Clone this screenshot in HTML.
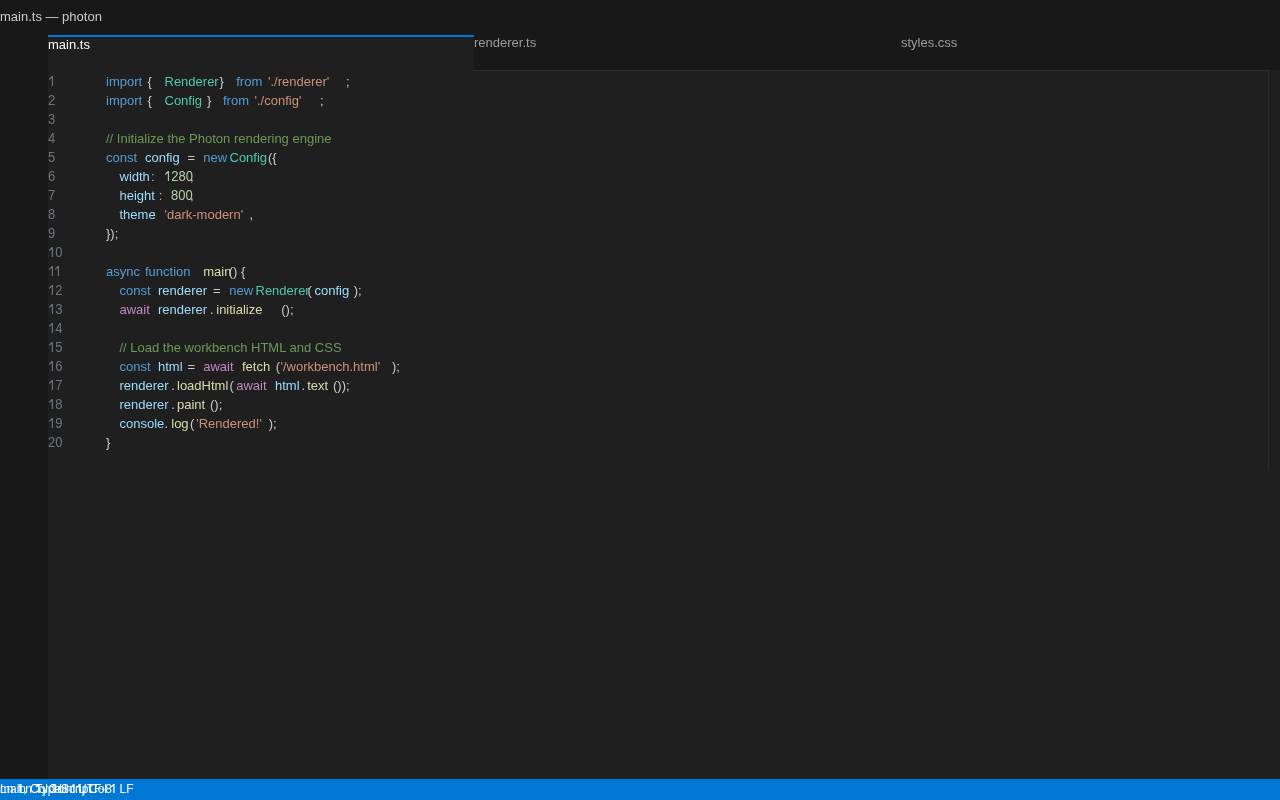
<!DOCTYPE html>
<html><head><meta charset="utf-8"><style>
html,body{margin:0;padding:0;width:1280px;height:800px;overflow:hidden;background:#181818;font-family:"Liberation Sans",sans-serif;}
#root{position:absolute;left:0;top:0;width:1280px;height:800px;will-change:transform}
.bg{position:absolute}
.tk{position:absolute;font-size:13px;line-height:19px;white-space:pre;transform:scaleY(1);transform-origin:0 14px}
.one{position:absolute;overflow:visible}
.dg{transform:scaleY(1.075);transform-origin:0 14px}
.t15{position:absolute;font-size:13px;line-height:15px;white-space:pre;transform:scaleY(1);transform-origin:0 12px}
.sb{position:absolute;top:782px;font-size:12px;line-height:14px;white-space:pre;color:#ffffff;transform:scaleY(1);transform-origin:0 11px}
</style></head><body>
<div id="root">
<div class="bg" style="left:48px;top:35px;width:426px;height:35px;background:#1f1f1f"></div>
<div class="bg" style="left:48px;top:35px;width:426px;height:2px;background:#0078d4"></div>
<div class="bg" style="left:48px;top:70px;width:1232px;height:709px;background:#1f1f1f"></div>
<div class="bg" style="left:474px;top:70px;width:794px;height:1px;background:#2b2b2b"></div>
<div class="bg" style="left:1268px;top:70px;width:1px;height:399px;background:#2b2b2b"></div>
<div class="bg" style="left:0;top:779px;width:1280px;height:21px;background:#0078d4"></div>
<span class="t15" style="left:0;top:9px;color:#cccccc">main.ts — photon</span>
<span class="t15" style="left:48px;top:36.5px;color:#ffffff">main.ts</span>
<span class="t15" style="left:474px;top:34.5px;color:#9d9d9d">renderer.ts</span>
<span class="t15" style="left:901px;top:34.5px;color:#9d9d9d">styles.css</span>
<svg class="one" style="left:48.0px;top:75px" width="7" height="12"><polygon points="3.85,1.00 4.95,1.00 4.95,11.00 3.85,11.00 3.85,3.10 1.10,4.90 1.10,3.80" fill="#6e7681"/></svg>
<span class="tk" style="left:106px;top:72px;color:#569cd6">import</span>
<span class="tk" style="left:147.5px;top:72px;color:#cccccc">{</span>
<span class="tk" style="left:164.5px;top:72px;color:#4ec9b0">Renderer</span>
<span class="tk" style="left:219.5px;top:72px;color:#cccccc">}</span>
<span class="tk" style="left:236.25px;top:72px;color:#569cd6">from</span>
<span class="tk" style="left:268px;top:72px;color:#ce9178">&#x27;./renderer&#x27;</span>
<span class="tk" style="left:346px;top:72px;color:#cccccc">;</span>
<span class="tk dg" style="left:48.0px;top:91px;color:#6e7681">2</span>
<span class="tk" style="left:106px;top:91px;color:#569cd6">import</span>
<span class="tk" style="left:147.5px;top:91px;color:#cccccc">{</span>
<span class="tk" style="left:164.5px;top:91px;color:#4ec9b0">Config</span>
<span class="tk" style="left:207px;top:91px;color:#cccccc">}</span>
<span class="tk" style="left:223px;top:91px;color:#569cd6">from</span>
<span class="tk" style="left:254.5px;top:91px;color:#ce9178">&#x27;./config&#x27;</span>
<span class="tk" style="left:320px;top:91px;color:#cccccc">;</span>
<span class="tk dg" style="left:48.0px;top:110px;color:#6e7681">3</span>
<span class="tk dg" style="left:48.0px;top:129px;color:#6e7681">4</span>
<span class="tk" style="left:106px;top:129px;color:#6a9955">// Initialize the Photon rendering engine</span>
<span class="tk dg" style="left:48.0px;top:148px;color:#6e7681">5</span>
<span class="tk" style="left:106px;top:148px;color:#569cd6">const</span>
<span class="tk" style="left:145px;top:148px;color:#9cdcfe">config</span>
<span class="tk" style="left:187.5px;top:148px;color:#cccccc">=</span>
<span class="tk" style="left:203.25px;top:148px;color:#569cd6">new</span>
<span class="tk" style="left:229.5px;top:148px;color:#4ec9b0">Config</span>
<span class="tk" style="left:268px;top:148px;color:#cccccc">({</span>
<span class="tk dg" style="left:48.0px;top:167px;color:#6e7681">6</span>
<span class="tk" style="left:119.5px;top:167px;color:#9cdcfe">width</span>
<span class="tk" style="left:151px;top:167px;color:#d7ba7d">:</span>
<svg class="one" style="left:164.0px;top:170px" width="7" height="12"><polygon points="3.85,1.00 4.95,1.00 4.95,11.00 3.85,11.00 3.85,3.10 1.10,4.90 1.10,3.80" fill="#b5cea8"/></svg><span class="tk dg" style="left:171.234375px;top:167px;color:#b5cea8">2</span><span class="tk dg" style="left:178.46875px;top:167px;color:#b5cea8">8</span><span class="tk dg" style="left:185.703125px;top:167px;color:#b5cea8">0</span>
<span class="tk" style="left:190px;top:167px;color:#cccccc">,</span>
<span class="tk dg" style="left:48.0px;top:186px;color:#6e7681">7</span>
<span class="tk" style="left:119.5px;top:186px;color:#9cdcfe">height</span>
<span class="tk" style="left:158.75px;top:186px;color:#d7ba7d">:</span>
<span class="tk dg" style="left:171.0px;top:186px;color:#b5cea8">8</span><span class="tk dg" style="left:178.234375px;top:186px;color:#b5cea8">0</span><span class="tk dg" style="left:185.46875px;top:186px;color:#b5cea8">0</span>
<span class="tk" style="left:190px;top:186px;color:#cccccc">,</span>
<span class="tk dg" style="left:48.0px;top:205px;color:#6e7681">8</span>
<span class="tk" style="left:119.5px;top:205px;color:#9cdcfe">theme</span>
<span class="tk" style="left:152px;top:205px;color:#d7ba7d">:</span>
<span class="tk" style="left:164.5px;top:205px;color:#ce9178">&#x27;dark-modern&#x27;</span>
<span class="tk" style="left:249.5px;top:205px;color:#cccccc">,</span>
<span class="tk dg" style="left:48.0px;top:224px;color:#6e7681">9</span>
<span class="tk" style="left:106px;top:224px;color:#cccccc">});</span>
<svg class="one" style="left:48.0px;top:246px" width="7" height="12"><polygon points="3.85,1.00 4.95,1.00 4.95,11.00 3.85,11.00 3.85,3.10 1.10,4.90 1.10,3.80" fill="#6e7681"/></svg><span class="tk dg" style="left:55.234375px;top:243px;color:#6e7681">0</span>
<svg class="one" style="left:48.0px;top:265px" width="7" height="12"><polygon points="3.85,1.00 4.95,1.00 4.95,11.00 3.85,11.00 3.85,3.10 1.10,4.90 1.10,3.80" fill="#6e7681"/></svg><svg class="one" style="left:54.234375px;top:265px" width="7" height="12"><polygon points="3.85,1.00 4.95,1.00 4.95,11.00 3.85,11.00 3.85,3.10 1.10,4.90 1.10,3.80" fill="#6e7681"/></svg>
<span class="tk" style="left:106px;top:262px;color:#569cd6">async</span>
<span class="tk" style="left:145px;top:262px;color:#569cd6">function</span>
<span class="tk" style="left:203.25px;top:262px;color:#dcdcaa">main</span>
<span class="tk" style="left:228.75px;top:262px;color:#cccccc">()</span>
<span class="tk" style="left:241px;top:262px;color:#cccccc">{</span>
<svg class="one" style="left:48.0px;top:284px" width="7" height="12"><polygon points="3.85,1.00 4.95,1.00 4.95,11.00 3.85,11.00 3.85,3.10 1.10,4.90 1.10,3.80" fill="#6e7681"/></svg><span class="tk dg" style="left:55.234375px;top:281px;color:#6e7681">2</span>
<span class="tk" style="left:119.5px;top:281px;color:#569cd6">const</span>
<span class="tk" style="left:158px;top:281px;color:#9cdcfe">renderer</span>
<span class="tk" style="left:213px;top:281px;color:#cccccc">=</span>
<span class="tk" style="left:229.25px;top:281px;color:#569cd6">new</span>
<span class="tk" style="left:255.5px;top:281px;color:#4ec9b0">Renderer</span>
<span class="tk" style="left:307.5px;top:281px;color:#cccccc">(</span>
<span class="tk" style="left:314.5px;top:281px;color:#9cdcfe">config</span>
<span class="tk" style="left:353.75px;top:281px;color:#cccccc">);</span>
<svg class="one" style="left:48.0px;top:303px" width="7" height="12"><polygon points="3.85,1.00 4.95,1.00 4.95,11.00 3.85,11.00 3.85,3.10 1.10,4.90 1.10,3.80" fill="#6e7681"/></svg><span class="tk dg" style="left:55.234375px;top:300px;color:#6e7681">3</span>
<span class="tk" style="left:119.5px;top:300px;color:#c586c0">await</span>
<span class="tk" style="left:158px;top:300px;color:#9cdcfe">renderer</span>
<span class="tk" style="left:210px;top:300px;color:#cccccc">.</span>
<span class="tk" style="left:216.25px;top:300px;color:#dcdcaa">initialize</span>
<span class="tk" style="left:281.25px;top:300px;color:#cccccc">();</span>
<svg class="one" style="left:48.0px;top:322px" width="7" height="12"><polygon points="3.85,1.00 4.95,1.00 4.95,11.00 3.85,11.00 3.85,3.10 1.10,4.90 1.10,3.80" fill="#6e7681"/></svg><span class="tk dg" style="left:55.234375px;top:319px;color:#6e7681">4</span>
<svg class="one" style="left:48.0px;top:341px" width="7" height="12"><polygon points="3.85,1.00 4.95,1.00 4.95,11.00 3.85,11.00 3.85,3.10 1.10,4.90 1.10,3.80" fill="#6e7681"/></svg><span class="tk dg" style="left:55.234375px;top:338px;color:#6e7681">5</span>
<span class="tk" style="left:119.5px;top:338px;color:#6a9955">// Load the workbench HTML and CSS</span>
<svg class="one" style="left:48.0px;top:360px" width="7" height="12"><polygon points="3.85,1.00 4.95,1.00 4.95,11.00 3.85,11.00 3.85,3.10 1.10,4.90 1.10,3.80" fill="#6e7681"/></svg><span class="tk dg" style="left:55.234375px;top:357px;color:#6e7681">6</span>
<span class="tk" style="left:119.5px;top:357px;color:#569cd6">const</span>
<span class="tk" style="left:158px;top:357px;color:#9cdcfe">html</span>
<span class="tk" style="left:187.5px;top:357px;color:#cccccc">=</span>
<span class="tk" style="left:203.25px;top:357px;color:#c586c0">await</span>
<span class="tk" style="left:242px;top:357px;color:#dcdcaa">fetch</span>
<span class="tk" style="left:275.75px;top:357px;color:#cccccc">(</span>
<span class="tk" style="left:280.5px;top:357px;color:#ce9178">&#x27;/workbench.html&#x27;</span>
<span class="tk" style="left:392px;top:357px;color:#cccccc">);</span>
<svg class="one" style="left:48.0px;top:379px" width="7" height="12"><polygon points="3.85,1.00 4.95,1.00 4.95,11.00 3.85,11.00 3.85,3.10 1.10,4.90 1.10,3.80" fill="#6e7681"/></svg><span class="tk dg" style="left:55.234375px;top:376px;color:#6e7681">7</span>
<span class="tk" style="left:119.5px;top:376px;color:#9cdcfe">renderer</span>
<span class="tk" style="left:171.25px;top:376px;color:#cccccc">.</span>
<span class="tk" style="left:177px;top:376px;color:#dcdcaa">loadHtml</span>
<span class="tk" style="left:229.5px;top:376px;color:#cccccc">(</span>
<span class="tk" style="left:236.25px;top:376px;color:#c586c0">await</span>
<span class="tk" style="left:275px;top:376px;color:#9cdcfe">html</span>
<span class="tk" style="left:301.5px;top:376px;color:#cccccc">.</span>
<span class="tk" style="left:307.25px;top:376px;color:#dcdcaa">text</span>
<span class="tk" style="left:333px;top:376px;color:#cccccc">());</span>
<svg class="one" style="left:48.0px;top:398px" width="7" height="12"><polygon points="3.85,1.00 4.95,1.00 4.95,11.00 3.85,11.00 3.85,3.10 1.10,4.90 1.10,3.80" fill="#6e7681"/></svg><span class="tk dg" style="left:55.234375px;top:395px;color:#6e7681">8</span>
<span class="tk" style="left:119.5px;top:395px;color:#9cdcfe">renderer</span>
<span class="tk" style="left:171.25px;top:395px;color:#cccccc">.</span>
<span class="tk" style="left:177px;top:395px;color:#dcdcaa">paint</span>
<span class="tk" style="left:210px;top:395px;color:#cccccc">();</span>
<svg class="one" style="left:48.0px;top:417px" width="7" height="12"><polygon points="3.85,1.00 4.95,1.00 4.95,11.00 3.85,11.00 3.85,3.10 1.10,4.90 1.10,3.80" fill="#6e7681"/></svg><span class="tk dg" style="left:55.234375px;top:414px;color:#6e7681">9</span>
<span class="tk" style="left:119.5px;top:414px;color:#9cdcfe">console</span>
<span class="tk" style="left:164.5px;top:414px;color:#cccccc">.</span>
<span class="tk" style="left:171.25px;top:414px;color:#dcdcaa">log</span>
<span class="tk" style="left:190px;top:414px;color:#cccccc">(</span>
<span class="tk" style="left:196.25px;top:414px;color:#ce9178">&#x27;Rendered!&#x27;</span>
<span class="tk" style="left:268.75px;top:414px;color:#cccccc">);</span>
<span class="tk dg" style="left:48.0px;top:433px;color:#6e7681">2</span><span class="tk dg" style="left:55.234375px;top:433px;color:#6e7681">0</span>
<span class="tk" style="left:106px;top:433px;color:#cccccc">}</span>
<span class="sb" style="left:0.000px">main</span><span class="sb" style="left:0.000px">Ln </span><svg class="one" style="left:16.672px;top:782px" width="7" height="12"><polygon points="3.30,2.00 4.60,2.00 4.60,11.00 3.30,11.00 3.30,4.10 0.90,5.60 0.90,4.30" fill="#ffffff"/></svg><span class="sb" style="left:23.344px">, Col </span><svg class="one" style="left:51.344px;top:782px" width="7" height="12"><polygon points="3.30,2.00 4.60,2.00 4.60,11.00 3.30,11.00 3.30,4.10 0.90,5.60 0.90,4.30" fill="#ffffff"/></svg><span class="sb" style="left:18.600px">Ln </span><svg class="one" style="left:35.272px;top:782px" width="7" height="12"><polygon points="3.30,2.00 4.60,2.00 4.60,11.00 3.30,11.00 3.30,4.10 0.90,5.60 0.90,4.30" fill="#ffffff"/></svg><span class="sb" style="left:41.944px">, Col </span><svg class="one" style="left:69.944px;top:782px" width="7" height="12"><polygon points="3.30,2.00 4.60,2.00 4.60,11.00 3.30,11.00 3.30,4.10 0.90,5.60 0.90,4.30" fill="#ffffff"/></svg><span class="sb" style="left:35.000px">TypeScript</span><span class="sb" style="left:59.000px">Ln </span><svg class="one" style="left:75.672px;top:782px" width="7" height="12"><polygon points="3.30,2.00 4.60,2.00 4.60,11.00 3.30,11.00 3.30,4.10 0.90,5.60 0.90,4.30" fill="#ffffff"/></svg><span class="sb" style="left:82.344px">, Col </span><svg class="one" style="left:110.344px;top:782px" width="7" height="12"><polygon points="3.30,2.00 4.60,2.00 4.60,11.00 3.30,11.00 3.30,4.10 0.90,5.60 0.90,4.30" fill="#ffffff"/></svg><span class="sb" style="left:78.000px">UTF-8</span><span class="sb" style="left:119.500px">LF</span>
</div>
</body></html>
